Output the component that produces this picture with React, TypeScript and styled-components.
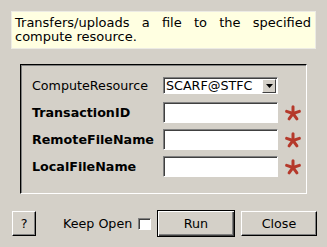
import { Fragment } from "react"
import styled, { createGlobalStyle } from "styled-components"

const Global = createGlobalStyle`
    html, body {
        margin: 0;
        padding: 0;
        background: #d4d0c8;
    }
    body {
        font-family: "DejaVu Sans", "Liberation Sans", sans-serif;
        font-size: 12.7px;
        color: #000000;
    }
`

const Page = styled.div`
    width: 327px;
    height: 247px;
    padding-top: 11px;
    box-sizing: border-box;
`

const Description = styled.div`
    margin-left: 11px;
    width: 305px;
    height: 38px;
    box-sizing: border-box;
    background: #ffffe1;
    border: 1px solid #ecebe4;
    padding: 4px 4px 0 3px;
    font-size: 13px;
    line-height: 14px;
    text-align: justify;
`

const Group = styled.div`
    margin: 15px 0 0 20px;
    width: 287px;
    height: 130px;
    box-sizing: border-box;
    border-top: 1px solid #000000;
    border-left: 1px solid #000000;
    border-right: 1px solid #ffffff;
    border-bottom: 1px solid #ffffff;
    box-shadow: inset 1px 1px 0 #808080;
    padding: 7px 0 0 11px;
    display: grid;
    grid-template-columns: 131px 115px 24px;
    grid-auto-rows: 27px;
    align-items: center;
`

const Label = styled.div<{ $bold?: boolean }>`
    font-weight: ${p => (p.$bold ? "bold" : "normal")};
    white-space: nowrap;
`

const sunken = `
    box-sizing: border-box;
    background: #ffffff;
    border-top: 1px solid #808080;
    border-left: 1px solid #808080;
    border-right: 1px solid #ffffff;
    border-bottom: 1px solid #ffffff;
    box-shadow: inset 1px 1px 0 #404040;
`

const Select = styled.div`
    ${sunken}
    width: 115px;
    height: 17px;
    display: flex;
    align-items: center;
    justify-content: space-between;
    padding-left: 2px;
    line-height: 14px;
`

const Arrow = styled.div`
    width: 14px;
    height: 14px;
    box-sizing: border-box;
    background: #d4d0c8;
    border-top: 1px solid #ffffff;
    border-left: 1px solid #ffffff;
    border-right: 1px solid #404040;
    border-bottom: 1px solid #404040;
    display: flex;
    align-items: center;
    justify-content: center;
    margin-right: 1px;
`

const TextField = styled.input`
    ${sunken}
    width: 115px;
    height: 21px;
    margin: 0;
    padding: 0 3px;
    font: inherit;
    outline: none;
`

const Required = styled.div`
    display: flex;
    justify-content: flex-end;
    align-items: center;
    padding-top: 1px;
`

const Footer = styled.div`
    margin-top: 16px;
    padding-left: 12px;
    height: 27px;
    display: flex;
    align-items: center;
`

const Button = styled.button<{ $w: number; $default?: boolean; $ml?: number }>`
    width: ${p => p.$w}px;
    height: ${p => (p.$default ? 27 : 25)}px;
    box-sizing: border-box;
    margin: 0 0 0 ${p => p.$ml ?? 0}px;
    padding: 0;
    font: inherit;
    color: #000000;
    background: #d4d0c8;
    border-top: 1px solid ${p => (p.$default ? "#000000" : "#ffffff")};
    border-left: 1px solid ${p => (p.$default ? "#000000" : "#ffffff")};
    border-right: 1px solid #000000;
    border-bottom: 1px solid #000000;
    box-shadow: ${p =>
        p.$default
            ? "inset 1px 1px 0 #ffffff, inset -1px -1px 0 #404040, inset -2px -2px 0 #808080"
            : "inset -1px -1px 0 #808080"};
`

const KeepOpen = styled.label`
    margin-left: 27px;
    width: 88px;
    display: flex;
    align-items: center;
    justify-content: space-between;
    margin-right: 6px;
    white-space: nowrap;
`

const Box = styled.span`
    ${sunken}
    width: 13px;
    height: 12px;
    display: inline-block;
`

function Asterisk() {
    return (
        <svg width="18" height="16" viewBox="0 0 18 16">
            <g stroke="#b5392b" strokeWidth="3" strokeLinecap="round">
                <line x1="9" y1="8.5" x2="9" y2="1.8" />
                <line x1="9" y1="8.5" x2="15.4" y2="6.4" />
                <line x1="9" y1="8.5" x2="12.9" y2="13.8" />
                <line x1="9" y1="8.5" x2="5.1" y2="13.8" />
                <line x1="9" y1="8.5" x2="2.6" y2="6.4" />
            </g>
        </svg>
    )
}

const fields = ["TransactionID", "RemoteFileName", "LocalFileName"]

export default function App() {
    return (
        <Page>
            <Global />
            <Description>
                Transfers/uploads a file to the specified compute resource.
            </Description>
            <Group>
                <Label>ComputeResource</Label>
                <Select>
                    <span>SCARF@STFC</span>
                    <Arrow>
                        <svg width="7" height="4" viewBox="0 0 7 4">
                            <path d="M0 0H7L3.5 4Z" fill="#000" />
                        </svg>
                    </Arrow>
                </Select>
                <div />
                {fields.map(f => (
                    <Fragment key={f}>
                        <Label $bold>{f}</Label>
                        <TextField />
                        <Required>
                            <Asterisk />
                        </Required>
                    </Fragment>
                ))}
            </Group>
            <Footer>
                <Button $w={24}>?</Button>
                <KeepOpen>
                    Keep Open <Box />
                </KeepOpen>
                <Button $w={78} $default>Run</Button>
                <Button $w={76} $ml={6}>Close</Button>
            </Footer>
        </Page>
    )
}
